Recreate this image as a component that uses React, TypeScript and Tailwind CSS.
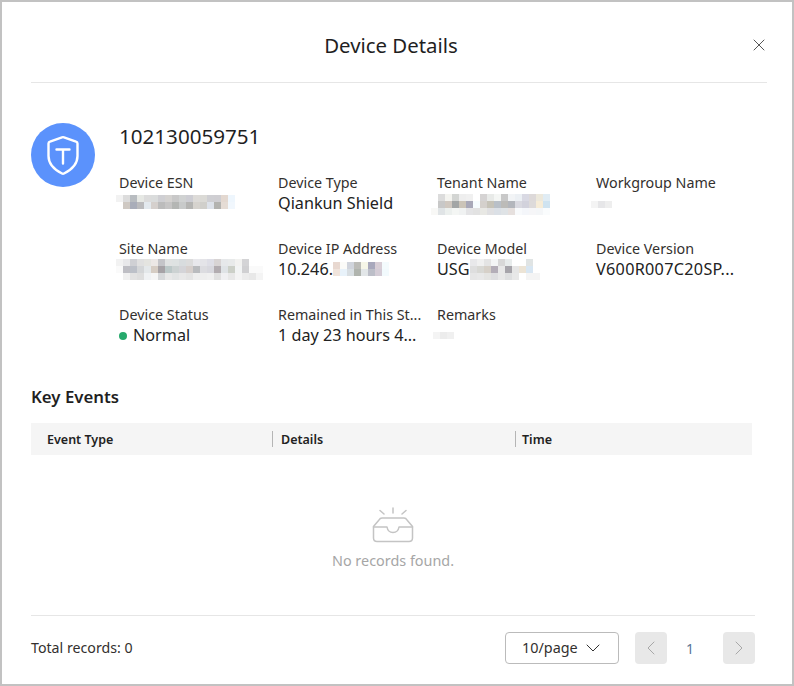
import { X, ChevronDown, ChevronLeft, ChevronRight } from "lucide-react";

// blurred-out values in the screenshot, one colour per 7px block
const esn = [
  ["#f2f2f2", "#dcdcdc", "#b8bcc0", "#e6e8e4", "#dcdcdc", "#dadcdc", "#cfcfd3", "#d4d2d0", "#c8c8c8", "#d0d2d2", "#cdcdd3", "#dddbd8", "#dbdad6", "#cfcfd3", "#cfced2", "#e3d8d0", "#eef6fd"],
  ["#ffffff", "#cfc9c3", "#a9adb9", "#bbbbbd", "#e3e9ee", "#d5d0cd", "#bcbcbc", "#c6c5c5", "#b4b6b4", "#c8caca", "#b5b5b3", "#d6d3ce", "#d0cfcb", "#dde2ea", "#b3b3b0", "#e5dcd5", "#f1f7fd"],
];
const tenant = [
  ["#ffffff", "#dcdcdc", "#f4f4f0", "#d3d5d3", "#eeeeee", "#f0f0f0", "#ffffff", "#d5d3d3", "#e8eae8", "#f4f6f4", "#c8c8c8", "#f2f4f6", "#ecf0f4", "#d9d9e3", "#ddd9d9", "#ece8dc", "#e0ecf4"],
  ["#ffffff", "#c8c8c8", "#d0c8c0", "#a3a6a6", "#cbc4b8", "#a8a8b8", "#f6fcfe", "#d4d0cc", "#c6c3b8", "#b9c0c8", "#bcbbb8", "#b3b6bc", "#d9d9e0", "#d2d2dc", "#dddada", "#f6ecd8", "#cfe3f0"],
  ["#f8f8f6", "#e0e4e6", "#ecf0ee", "#f4f6f4", "#f0f2f2", "#e4e4e6", "#e2e2e2", "#e8e8e4", "#e0e0e2", "#dbe0e6", "#dfe3e6", "#e6e0de", "#f8fafc", "#f4f6fa", "#f6f6f8", "#f4f6f8", "#fafcfd"],
];
const workgroup = [["#f4f4f4", "#e6e6e8", "#eeeeee"]];
const site = [
  ["#f2f2f2", "#e8e8ea", "#cfd0d4", "#e0e0e0", "#e4e4e0", "#ece8e6", "#c4c4c8", "#e0e2e2", "#dee2e2", "#d8dcde", "#dcdcdc", "#e8e8ec", "#e4e4e8", "#dedee6", "#d8d4d4", "#e6e8ea", "#e8eaea", "#f2f2f0", "#d4d4d6", "#ffffff", "#ffffff"],
  ["#fafafa", "#bebec4", "#bcc0c8", "#d4d6d8", "#e4e8ea", "#d6cdc4", "#a6a2a6", "#bcc8c8", "#ccd2d2", "#d4d4d8", "#d6cfcc", "#b9bbbe", "#dcdce0", "#d8d8de", "#b2acb0", "#dfe3e6", "#ccd0c8", "#f2f4f4", "#d0d0d2", "#fafafa", "#fafafa"],
  ["#ffffff", "#f0f0f0", "#e2e2e2", "#dedede", "#f0f2f4", "#f6f6f6", "#d6d8da", "#e8e8e8", "#e2e4e4", "#e8e8e8", "#e4e4e4", "#eeeeee", "#eeeeee", "#f0f0f0", "#e0e0e0", "#f0f0f2", "#e8e8e8", "#f4f4f4", "#ececec", "#e8e8e8", "#f4f4f4"],
];
const ip = [
  ["#e8d8d0", "#fbfbf8", "#d0d4dc", "#bcbcb8", "#f6f6e8", "#a8a8bc", "#d8ced6", "#f4fbfd"],
  ["#f0e4dc", "#e8f2fa", "#d8dee2", "#b0b4ae", "#e2e6e8", "#bcbec8", "#d4ccd6", "#f2fafd"],
];
const model = [
  ["#e8e8ea", "#f0f0f0", "#e4e4e4", "#f4f6f6", "#d8d8d8", "#e8ecec", "#ffffff", "#ffffff", "#e0e4e4", "#ffffff"],
  ["#dedede", "#d8d8d4", "#d6d0c8", "#b4aeb8", "#e8e8e8", "#a6a4aa", "#e6e6e6", "#ece4d6", "#d8e6f2", "#ffffff"],
  ["#e6e6e6", "#e8e8e8", "#e4e4e2", "#dedee0", "#e8e8e8", "#dedfe0", "#e8e8e8", "#ffffff", "#f4f4f4", "#f4f4f4"],
];
const remarks = [["#f4f4f4", "#ececec", "#f0f0f0"]];

function Mosaic({ rows, className }: { rows: string[][]; className: string }) {
  return (
    <div className={`flex flex-col shrink-0 self-start ${className}`}>
      {rows.map((row, i) => (
        <div key={i} className="flex">
          {row.map((c, j) => (
            <div key={j} className="w-[7px] h-[7px]" style={{ backgroundColor: c }} />
          ))}
        </div>
      ))}
    </div>
  );
}

function Field({ label, children }: { label: string; children?: React.ReactNode }) {
  return (
    <div className="w-[159px] h-[66px]">
      <div className="h-[19px] leading-[20px] text-[14.3px] text-[#33302e] whitespace-nowrap">{label}</div>
      <div className="h-[22px] leading-[22px] text-[16.2px] text-[#222222] flex items-center whitespace-nowrap">{children}</div>
    </div>
  );
}

function ShieldIcon() {
  return (
    <svg width="64" height="64" viewBox="0 0 64 64" fill="none" className="shrink-0">
      <circle cx="32" cy="32" r="32" fill="#5b92fc" />
      <path d="M31 14.3 a3 3 0 0 1 2 0 L45 18.6 a2 2 0 0 1 1.5 1.9 V33 C46.5 42 39 47.5 33 50.5 a2 2 0 0 1 -2 0 C25 47.5 17.5 42 17.5 33 V20.5 a2 2 0 0 1 1.5 -1.9 Z" stroke="#fff" strokeWidth="2.4" strokeLinejoin="round" />
      <path d="M25.5 26.5 H38.5 M32 26.5 V40.5" stroke="#fff" strokeWidth="2.4" strokeLinecap="round" />
    </svg>
  );
}

function EmptyIcon() {
  return (
    <svg width="42" height="36" viewBox="0 0 42 36" fill="none" stroke="#c4c4c4" strokeWidth="1.5" strokeLinecap="round" strokeLinejoin="round">
      <path d="M21 1 V6 M8 3.5 L12 7 M34 3.5 L30 7" />
      <path d="M10 11 H32 C33.5 11 34.5 12 35 13 L40.5 19.5 V31 C40.5 33 39 34.5 37 34.5 H5 C3 34.5 1.5 33 1.5 31 V19.5 L7 13 C7.5 12 8.5 11 10 11 Z" />
      <path d="M1.5 20 H15 C15.5 23 17.5 25.5 21 25.5 C24.5 25.5 26.5 23 27 20 H40.5" />
    </svg>
  );
}

export default function App() {
  return (
    <div className="w-[794px] h-[686px] bg-white border-2 border-[#c2c2c2] flex flex-col font-['Noto_Sans','Liberation_Sans',sans-serif] text-[#222222] overflow-hidden">
      {/* header */}
      <div className="relative h-[81px] ml-[29px] w-[736px] border-b border-[#e6e6e6] flex items-center justify-center shrink-0">
        <h1 className="text-[20.4px] leading-[28px] text-[#1f1f1f] pt-[6px] pr-[16px]">Device Details</h1>
        <X className="absolute right-[-2px] top-[33px] text-[#555555]" size={20} strokeWidth={1.2} />
      </div>

      {/* device info */}
      <div className="flex pl-[29px] pt-[40px] shrink-0">
        <ShieldIcon />
        <div className="ml-[24px]">
          <div className="h-[28px] leading-[26px] text-[20.6px] text-[#1f1f1f]">102130059751</div>
          <div className="mt-[22px] flex flex-wrap w-[640px]">
            <Field label="Device ESN"><Mosaic rows={esn} className="-ml-[3px] mt-[3px]" /></Field>
            <Field label="Device Type">Qiankun Shield</Field>
            <Field label="Tenant Name"><Mosaic rows={tenant} className="-ml-[6px] mt-[2px]" /></Field>
            <Field label="Workgroup Name"><Mosaic rows={workgroup} className="-ml-[5px] mt-[9px]" /></Field>
            <Field label="Site Name"><Mosaic rows={site} className="-ml-[3px] mt-[1px]" /></Field>
            <Field label="Device IP Address">10.246.<Mosaic rows={ip} className="mt-[4px]" /></Field>
            <Field label="Device Model">USG<Mosaic rows={model} className="mt-[1px]" /></Field>
            <Field label="Device Version"><span className="tracking-[0.3px]">V600R007C20SP...</span></Field>
            <Field label="Device Status">
              <span className="w-[8px] h-[8px] rounded-full bg-[#26a96c] mr-[6px] mt-[2px]" />Normal
            </Field>
            <Field label="Remained in This St...">1 day 23 hours 4...</Field>
            <Field label="Remarks"><Mosaic rows={remarks} className="-ml-[4px] mt-[8px]" /></Field>
          </div>
        </div>
      </div>

      {/* key events */}
      <div className="pl-[29px] mt-[14px] shrink-0">
        <h2 className="text-[16.8px] leading-[24px] font-semibold text-[#1f1f1f]">Key Events</h2>
        <div className="mt-[14px] w-[721px] h-[32px] bg-[#f5f5f5] flex items-center text-[12.5px] font-semibold text-[#222222]">
          <div className="w-[242px] pl-[16px] border-r border-[#b5b5b5] leading-[16px]"><span className="relative top-[1px]">Event Type</span></div>
          <div className="w-[243px] pl-[8px] border-r border-[#b5b5b5] leading-[16px]"><span className="relative top-[1px]">Details</span></div>
          <div className="pl-[6px] leading-[16px]"><span className="relative top-[1px]">Time</span></div>
        </div>
      </div>

      {/* empty state */}
      <div className="h-[161px] w-[724px] ml-[29px] border-b border-[#e6e6e6] flex flex-col items-center pt-[52px] shrink-0">
        <EmptyIcon />
        <div className="mt-[8px] text-[14.4px] leading-[20px] text-[#a6a6a6]">No records found.</div>
      </div>

      {/* footer */}
      <div className="flex items-center w-[724px] ml-[29px] mt-[16px] h-[32px] shrink-0">
        <div className="text-[14.2px] text-[#33302e]">Total records: 0</div>
        <div className="ml-auto flex items-center">
          <div className="w-[114px] h-[32px] border border-[#bbbbbb] rounded-[4px] flex items-center pl-[16px] gap-[3px] text-[14.4px] text-[#33302e]">
            10/page
            <ChevronDown size={24} strokeWidth={1} className="text-[#333333]" />
          </div>
          <button className="ml-[16px] w-[32px] h-[32px] rounded-[4px] bg-[#e8e8e8] flex items-center justify-center">
            <ChevronLeft size={24} strokeWidth={1} className="text-[#a8a8a8]" />
          </button>
          <div className="w-[56px] pr-[10px] text-center text-[14px] text-[#5a7596]">1</div>
          <button className="w-[32px] h-[32px] rounded-[4px] bg-[#e8e8e8] flex items-center justify-center">
            <ChevronRight size={24} strokeWidth={1} className="text-[#a8a8a8]" />
          </button>
        </div>
      </div>
    </div>
  );
}
